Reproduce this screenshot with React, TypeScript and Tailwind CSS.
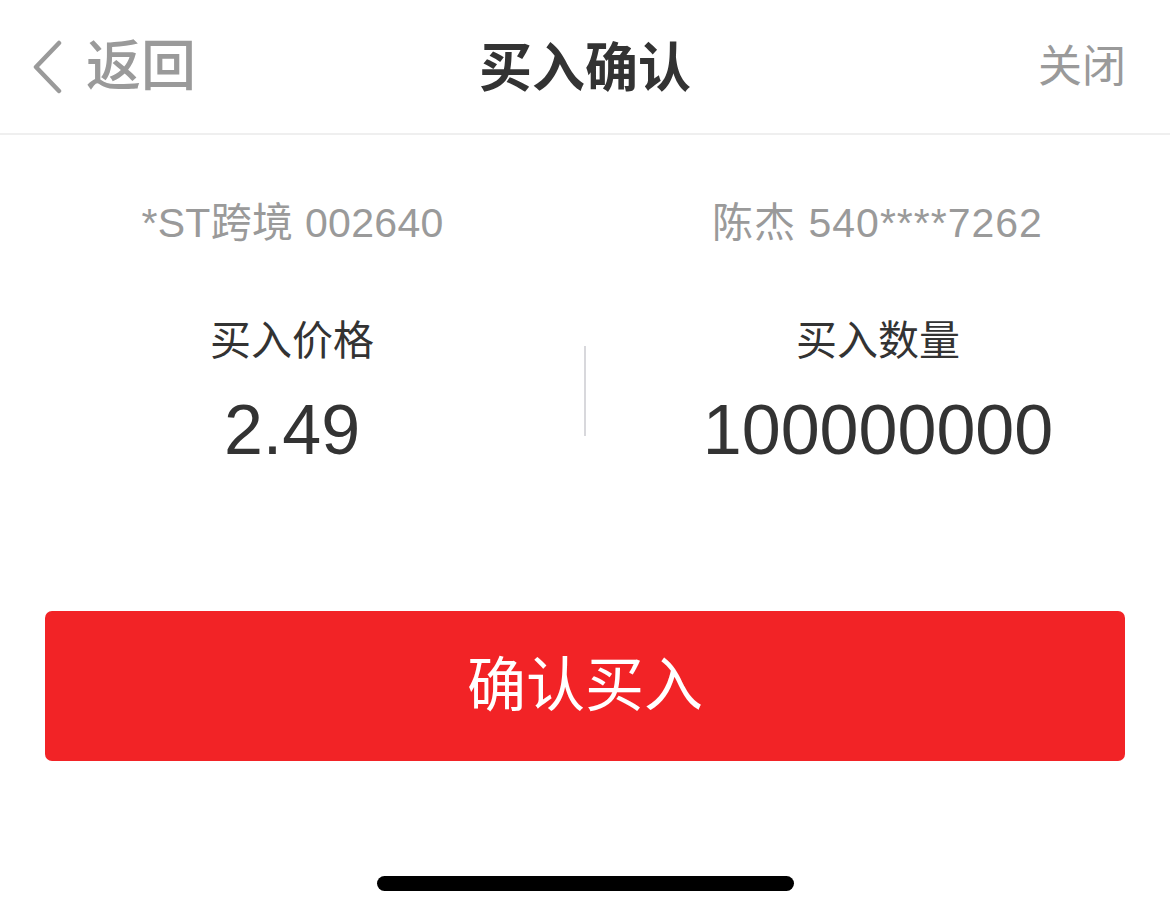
import { useState } from "react";

const FONT = "font-['Liberation_Sans','Noto_Sans_CJK_SC',sans-serif]";

interface Order {
  stockName: string;
  stockCode: string;
  account: string;
  price: string;
  quantity: string;
}

function BackIcon() {
  return (
    <svg width="34" height="54" viewBox="0 0 34 54" fill="none" className="shrink-0">
      <path d="M29 3 L6 27 L29 51" stroke="#9a9a9a" strokeWidth="4.5" strokeLinecap="round" strokeLinejoin="round" />
    </svg>
  );
}

function Stat({ label, value }: { label: string; value: string }) {
  return (
    <div className="flex flex-1 flex-col items-center">
      <span className="text-[41px] leading-[50px] text-[#333333]">{label}</span>
      <span className="mt-[24px] text-[70px] leading-[80px] text-[#333333]">{value}</span>
    </div>
  );
}

export default function App() {
  const [order] = useState<Order>({
    stockName: "*ST跨境",
    stockCode: "002640",
    account: "陈杰 540****7262",
    price: "2.49",
    quantity: "100000000",
  });

  return (
    <div className={`${FONT} relative flex h-[915px] w-[1170px] flex-col bg-white`}>
      {/* header */}
      <div className="relative flex h-[135px] items-center justify-between border-b-2 border-[#efefef] px-[30px]">
        <button className="flex items-center gap-[22px] text-[55px] leading-none text-[#9a9a9a]">
          <BackIcon />
          <span className="font-medium">返回</span>
        </button>
        <h1 className="absolute left-1/2 top-[39px] -translate-x-1/2 text-[53px] font-bold leading-[60px] text-[#333333]">
          买入确认
        </h1>
        <button className="pr-[14px] text-[44px] leading-none text-[#9a9a9a]">关闭</button>
      </div>

      {/* summary */}
      <div className="flex pt-[65px]">
        <div className="flex-1 text-center text-[41px] leading-[46px] tracking-[0.3px] text-[#9a9a9a]">
          {order.stockName} {order.stockCode}
        </div>
        <div className="flex-1 text-center text-[41px] leading-[46px] tracking-[1px] text-[#9a9a9a]">{order.account}</div>
      </div>

      <div className="mt-[70px] flex items-center">
        <Stat label="买入价格" value={order.price} />
        <div className="-mt-[4px] h-[90px] w-[2px] bg-[#d8d8dc]" />
        <Stat label="买入数量" value={order.quantity} />
      </div>

      {/* confirm */}
      <div className="mt-[141px] px-[45px]">
        <button className="flex h-[150px] w-full items-center justify-center rounded-[7px] bg-[#f22326] text-[59px] text-white">
          确认买入
        </button>
      </div>

      <div className="absolute bottom-[24px] left-[377px] h-[15px] w-[417px] rounded-full bg-black" />
    </div>
  );
}
